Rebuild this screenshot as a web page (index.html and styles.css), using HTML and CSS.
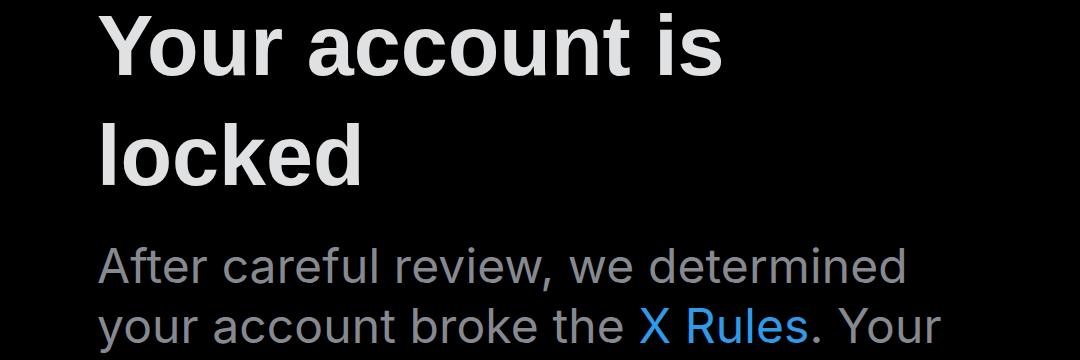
FILE: index.html
```html
<!DOCTYPE html>
<html lang="en">
<head>
<meta charset="utf-8">
<title>Your account is locked</title>
<link rel="stylesheet" href="styles.css">
</head>
<body>
<main class="page">
  <h1 class="title">Your account is locked</h1>
  <p class="body-text">After careful review, we determined your account broke the <a class="link" href="#">X Rules</a>. Your account is permanently in read-only mode.</p>
</main>
</body>
</html>
```
FILE: styles.css
```css
html, body {
  margin: 0;
  padding: 0;
  background: #000;
  height: 100%;
  overflow: hidden;
}
.page {
  display: flex;
  flex-direction: column;
  padding: 0 97px;
  gap: 25px;
}
.title {
  margin: -9px 0 0 0;
  font-family: "Liberation Sans", Arial, sans-serif;
  font-weight: 700;
  font-size: 84.5px;
  line-height: 110px;
  color: #e0e1e2;
}
.body-text {
  margin: 0;
  font-family: Inter, "Noto Sans", sans-serif;
  font-weight: 400;
  font-size: 48px;
  line-height: 60px;
  letter-spacing: 0.1px;
  color: #868a90;
}
.link {
  color: #2f9ae8;
  text-decoration: none;
}
```
